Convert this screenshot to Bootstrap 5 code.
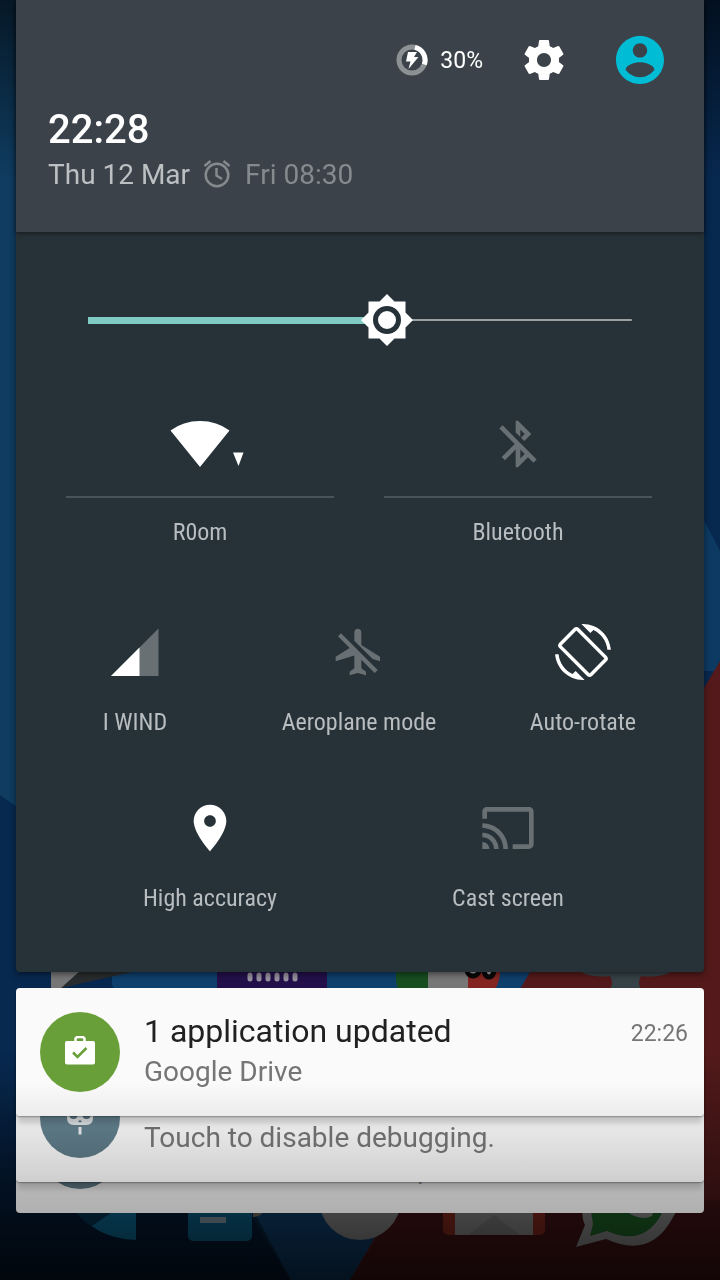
<!DOCTYPE html>
<html lang="en">
<head>
<meta charset="utf-8">
<meta name="viewport" content="width=device-width, initial-scale=1">
<title>Quick settings</title>
<link href="https://cdn.jsdelivr.net/npm/bootstrap@5.3.0/dist/css/bootstrap.min.css" rel="stylesheet">
<style>
  body { font-family: Roboto, "Noto Sans", sans-serif; background: #041c3a; min-height: 100vh; overflow-x: hidden; }
  .wallpaper { position: fixed; inset: 0; width: 100%; height: 100%; z-index: -1; }
  svg { display: block; flex: none; }
  button { font-family: inherit; }

  .shade-panel { background: #273238; border-radius: 0 0 4px 4px; box-shadow: 0 2px 6px rgba(0,0,0,.5); }
  .status-head { background: #3b4249; padding: 36px 40px 39px 32px; box-shadow: 0 1px 5px rgba(0,0,0,.5); }
  .status-icons { height: 48px; }
  .battery-text { font-size: 23px; line-height: 28px; color: #fff; margin: 2px 37px 0 12px; }
  .gear-btn { margin-right: 48px; }
  .clock { font-size: 40px; line-height: 48px; font-weight: 500; color: #fff; margin-top: 22px; }
  .date-row { font-size: 28px; line-height: 36px; margin-top: 3px; color: #bcc0c3; }
  .alarm { color: #858a8f; gap: 12px; margin-left: 11px; }

  .brightness { --level: .55; appearance: none; -webkit-appearance: none; display: block; width: 100%; height: 52px; margin: 0;
    background:
      linear-gradient(#80cbc4, #80cbc4) left 26px center / calc((100% - 52px) * var(--level)) 7px no-repeat,
      linear-gradient(#9a9fa2, #9a9fa2) right 26px center / calc((100% - 52px) * (1 - var(--level))) 2px no-repeat; }
  .brightness::-webkit-slider-thumb { appearance: none; -webkit-appearance: none; width: 52px; height: 52px; border: 0;
    background: url("data:image/svg+xml,%3Csvg xmlns='http://www.w3.org/2000/svg' viewBox='0 0 52 52'%3E%3Cpath fill='%23fff' d='M26 0l7.500 7.500H44.500V18.500L52 26l-7.500 7.500V44.500H33.500L26 52l-7.500-7.500H7.500V33.500L0 26l7.500-7.500V7.500H18.500z'/%3E%3Ccircle cx='26' cy='26' r='11.500' fill='none' stroke='%23263238' stroke-width='5'/%3E%3C/svg%3E") center / 52px no-repeat; }
  .brightness-row { padding: 62px 46px 70px; }

  .tiles { padding: 0 9px 60px 7px; }
  .tiles-wide { padding: 0 18px; margin-bottom: 78px; }
  .tiles-mid { margin-bottom: 64px; }
  .tiles-low { padding: 0 38px; }
  .tile { font-family: "Roboto Condensed", Roboto, sans-serif; font-size: 24px; line-height: 28px; color: #b8bdc0; }
  .tile-label { margin-top: 28px; }
  .tile-off svg { color: #687074; }
  .tile-on svg { color: #fff; }
  .tile-rule { height: 2px; background: #495359; margin: 24px 25px 20px; }

  .notes { margin: 16px 16px 67px; }
  .note { position: relative; padding: 24px 16px 24px 24px; border-radius: 4px; }
  .note-1 { z-index: 3; background: linear-gradient(#fafafa 74%, #ececec); box-shadow: 0 1px 2px rgba(0,0,0,.35), 0 9px 5px -2px rgba(0,0,0,.14); }
  .note-2 { z-index: 2; margin-top: -62px; background: linear-gradient(#e6e6e6 60%, #cfcfcf); box-shadow: 0 1px 2px rgba(0,0,0,.35), 0 9px 5px -2px rgba(0,0,0,.14); }
  .note-3 { z-index: 1; margin-top: -97px; background: linear-gradient(#b8b8b8 76%, #b0b0b0); }
  .note-icon { width: 80px; height: 80px; margin-right: 24px; flex: none; }
  .green-dot { background: #689f38; }
  .slate-dot { background: linear-gradient(#607d8b 40%, #526b77); }
  .deep-dot { background: #4a5e68; }
  .note-title { font-size: 32px; line-height: 38px; color: #212121; }
  .note-text { font-size: 28px; line-height: 36px; color: #757575; margin-top: 4px; }
  .note-2 .note-text { color: #6c6c6c; }
  .note-time { font-size: 23px; line-height: 28px; color: #757575; margin-top: 8px; }
</style>
</head>
<body>
<svg class="wallpaper" viewBox="0 0 720 1280" preserveAspectRatio="none" aria-hidden="true">
  <defs>
    <linearGradient id="dim" x1="0" y1="0" x2="0" y2="1">
      <stop offset="0" stop-color="#000" stop-opacity=".6"/><stop offset=".14" stop-color="#000" stop-opacity="0"/>
      <stop offset=".82" stop-color="#000" stop-opacity="0"/><stop offset="1" stop-color="#000" stop-opacity=".72"/>
    </linearGradient>
    <linearGradient id="low" x1="0" y1="0" x2="0" y2="1">
      <stop offset="0" stop-color="#010c1a" stop-opacity="0"/><stop offset=".7" stop-color="#010c1a" stop-opacity=".5"/><stop offset="1" stop-color="#010c1a" stop-opacity=".6"/>
    </linearGradient>
  </defs>
  <path fill="#07284f" d="M0 0h720v1280H0z"/>
  <path fill="#0f3c60" d="M0 0h400v1080L0 795z"/>
  <path fill="#07284f" d="M16 822V1280H0V795z"/>
  <path fill="#0f3f6c" d="M112 960h440v160l-190 160h-72L112 985z"/>
  <path fill="#0d3a62" d="M704 520l16 31v120h-30v-160z"/>
  <path fill="#541a1b" d="M720 661L704 688 537 960l-187 320h370z"/>
  <path fill="#390f12" d="M375 1240L350 1280h370v-80H395z" opacity=".6"/>
  <path fill="#777" d="M51 960h90l-80 28H51z"/><path fill="#292c2e" d="M141 970l-80 18 20-18z"/>
  <path fill="#23104a" d="M217 960h110v40H217z"/>
  <path stroke="#96919f" stroke-width="5" stroke-linecap="round" d="M250 975v4M259 975v4M268 975v4M277 975v4M286 975v4M295 975v4"/>
  <path fill="#174e20" d="M396 960h32v40h-24q-8-12-8-20z"/><path fill="#777" d="M428 960h42v40h-42z"/>
  <path fill="#842521" d="M468 960h32v15q-2 13-10 20h-22z"/>
  <g fill="#aaa" stroke="#080808" stroke-width="5"><ellipse cx="473" cy="970" rx="6" ry="6"/><ellipse cx="489" cy="970" rx="5" ry="7"/></g>
  <path fill="#364247" d="M581 972q12 6 29 4q4 6 0 14h31q-4-8 0-14q18 2 30-4z"/>
  <path fill="url(#low)" d="M0 1080h200l53 130 38 70H0z"/>
  <path fill="#0c6a94" d="M72 1205q22 34 64 35v-35z"/><path fill="#073657" d="M72 1205q10 18 20 21l22-15v-6z"/>
  <rect x="188" y="1195" width="64" height="46" rx="5" fill="#0b6189"/><path fill="#849da8" d="M200 1217h26v6h-26z"/>
  <path fill="#777066" d="M253 1205h12q-1 12-12 12z"/>
  <circle cx="360" cy="1199" r="41" fill="#888"/>
  <rect x="443" y="1190" width="102" height="45" rx="5" fill="#86291f"/><path fill="#8c8a8a" d="M455 1190h78v45h-78z"/><path fill="#7d7b7b" d="M494 1215l26 20h-52z"/>
  <path fill="#8c8c8c" d="M582 1205q0 16 3 20l-9 22 30-8q44 20 66-20l8-14z"/><path fill="#1e6527" d="M590 1205l3 19-3 12 17-5q36 16 54-16l3-10z"/><path fill="#959595" d="M618 1205q20 18 34 11l3-11z"/>
  <path fill="url(#dim)" d="M0 0h720v1280H0z"/>
</svg>

<main>
  <section class="shade-panel mx-3" aria-label="Quick settings">
    <header class="status-head">
      <div class="status-icons d-flex align-items-center justify-content-end">
        <svg width="32" height="32" viewBox="0 0 32 32" role="img" aria-label="Charging">
          <circle cx="16" cy="16" r="13" fill="none" stroke="#8c9194" stroke-width="5"/>
          <path fill="none" stroke="#fff" stroke-width="5" d="M19 3.350A13 13 0 0 1 28.300 20.500"/>
          <path fill="#fff" d="M12 8h9l-3 5h4.500L12.500 25l2-7.500H10z"/>
        </svg>
        <span class="battery-text">30%</span>
        <button class="gear-btn btn p-0 border-0" type="button" aria-label="Settings">
          <svg width="48" height="48" viewBox="0 0 24 24" fill="#fff"><path d="M19.430 12.980c.04-.32.07-.64.07-.98s-.03-.66-.07-.98l2.110-1.650c.19-.15.24-.42.12-.64l-2-3.460c-.12-.22-.39-.3-.61-.22l-2.490 1c-.52-.4-1.080-.73-1.690-.98l-.38-2.650C14.460 2.180 14.250 2 14 2h-4c-.25 0-.46.18-.49.42l-.38 2.650c-.61.25-1.170.59-1.690.98l-2.490-1c-.23-.09-.49 0-.61.22l-2 3.460c-.13.22-.07.49.12.64l2.110 1.650c-.04.32-.07.65-.07.98s.03.66.07.98l-2.110 1.650c-.19.15-.24.42-.12.64l2 3.460c.12.22.39.3.61.22l2.490-1c.52.4 1.080.73 1.690.98l.38 2.650c.03.24.24.42.49.42h4c.25 0 .46-.18.49-.42l.38-2.650c.61-.25 1.170-.59 1.690-.98l2.490 1c.23.09.49 0 .61-.22l2-3.460c.12-.22.07-.49-.12-.64l-2.110-1.650zM12 15.500c-1.930 0-3.500-1.570-3.500-3.500s1.570-3.500 3.500-3.500 3.500 1.570 3.500 3.500-1.570 3.500-3.500 3.500z"/></svg>
        </button>
        <button class="btn p-0 border-0" type="button" aria-label="User">
          <svg width="48" height="48" viewBox="2 2 20 20" fill="#00bcd4"><path d="M12 2C6.480 2 2 6.480 2 12s4.480 10 10 10 10-4.480 10-10S17.520 2 12 2zm0 3c1.660 0 3 1.340 3 3s-1.340 3-3 3-3-1.340-3-3 1.340-3 3-3zm0 14.200c-2.500 0-4.710-1.280-6-3.220.03-1.990 4-3.080 6-3.080 1.990 0 5.970 1.090 6 3.080-1.290 1.940-3.500 3.220-6 3.220z"/></svg>
        </button>
      </div>
      <div class="clock">22:28</div>
      <div class="date-row d-flex align-items-center">
        <span>Thu 12 Mar</span>
        <span class="alarm d-flex align-items-center">
          <svg width="32" height="32" viewBox="0 0 32 32" fill="none" stroke="currentColor" stroke-width="2.500" aria-hidden="true"><circle cx="16" cy="16" r="11.300"/><path d="M15.500 9v7.500l5.500 3.500M3.500 7L9.500 2M28.500 7l-6-5"/></svg>
          <span>Fri 08:30</span>
        </span>
      </div>
    </header>

    <div class="brightness-row">
      <input class="brightness" type="range" min="0" max="100" value="55" aria-label="Brightness" oninput="this.style.setProperty('--level', this.value / 100)">
    </div>

    <div class="tiles">
      <div class="tiles-wide">
        <div class="row g-0">
          <div class="col"><button type="button" class="tile tile-on btn p-0 border-0 w-100">
            <svg class="mx-auto" width="96" height="56" viewBox="0 0 96 56" fill="currentColor"><path d="M48 51L18.500 14.500Q31 5 48 5t29.500 9.500zM81 36.500h10.500L86.500 50z"/></svg>
            <span class="tile-rule d-block"></span><span class="d-block">R0om</span>
          </button></div>
          <div class="col"><button type="button" class="tile tile-off btn p-0 border-0 w-100">
            <svg class="mx-auto" width="56" height="56" viewBox="0 0 24 24" fill="currentColor"><path d="M13 5.830l1.880 1.880-1.600 1.600 1.410 1.410 3.020-3.020L12 2h-1v5.030l2 2v-3.200zM5.410 4L4 5.410 10.590 12 5 17.590 6.410 19 11 14.410V22h1l4.290-4.290 2.300 2.290L20 18.590 5.410 4zM13 18.170v-3.760l1.880 1.880L13 18.170z"/></svg>
            <span class="tile-rule d-block"></span><span class="d-block">Bluetooth</span>
          </button></div>
        </div>
      </div>
      <div class="tiles-mid row g-0">
        <div class="col"><button type="button" class="tile tile-on btn p-0 border-0 w-100">
          <svg class="mx-auto" width="56" height="56" viewBox="0 0 56 56"><path fill="#687074" d="M51.500 4.500V52H4z"/><path fill="#fff" d="M32.500 23.500V52H4z"/></svg>
          <span class="tile-label d-block">I WIND</span>
        </button></div>
        <div class="col"><button type="button" class="tile tile-off btn p-0 border-0 w-100">
          <svg class="mx-auto" width="56" height="56" viewBox="0 0 24 24" fill="currentColor"><path d="M13 9V3.500c0-.83-.67-1.500-1.500-1.500S10 2.670 10 3.500v3.680l7.830 7.830L21 16v-2l-8-5zM3 5.270l4.990 4.990L2 14v2l8-2.500V19l-2 1.500V22l3.500-1 3.500 1v-1.500L13 19v-3.730L18.730 21 20 19.730 4.270 4 3 5.270z"/></svg>
          <span class="tile-label d-block">Aeroplane mode</span>
        </button></div>
        <div class="col"><button type="button" class="tile tile-on btn p-0 border-0 w-100">
          <svg class="mx-auto" width="56" height="56" viewBox="0 0 24 24" fill="currentColor"><path d="M16.480 2.520c3.270 1.550 5.610 4.720 5.970 8.480h1.500C23.440 4.840 18.290 0 12 0l-.66.03 3.810 3.810 1.330-1.320zm-6.250-.77c-.59-.59-1.540-.59-2.120 0L1.750 8.110c-.59.59-.59 1.540 0 2.120l12.020 12.020c.59.59 1.540.59 2.120 0l6.360-6.360c.59-.59.59-1.540 0-2.120L10.230 1.750zm4.600 19.440L2.810 9.170l6.360-6.360 12.020 12.020-6.360 6.360zm-7.310.29C4.250 19.940 1.910 16.760 1.550 13H.05C.56 19.160 5.710 24 12 24l.66-.03-3.810-3.810-1.330 1.320z"/></svg>
          <span class="tile-label d-block">Auto-rotate</span>
        </button></div>
      </div>
      <div class="tiles-low">
        <div class="row g-0">
          <div class="col"><button type="button" class="tile tile-on btn p-0 border-0 w-100">
            <svg class="mx-auto" width="56" height="56" viewBox="0 0 24 24" fill="currentColor"><path d="M12 2C8.130 2 5 5.130 5 9c0 5.250 7 13 7 13s7-7.750 7-13c0-3.870-3.130-7-7-7zm0 9.500c-1.380 0-2.500-1.120-2.500-2.500s1.120-2.500 2.500-2.500 2.500 1.120 2.500 2.500-1.120 2.500-2.500 2.500z"/></svg>
            <span class="tile-label d-block">High accuracy</span>
          </button></div>
          <div class="col"><button type="button" class="tile tile-off btn p-0 border-0 w-100">
            <svg class="mx-auto" width="56" height="56" viewBox="0 0 24 24" fill="currentColor"><path d="M21 3H3c-1.100 0-2 .9-2 2v3h2V5h18v14h-7v2h7c1.100 0 2-.9 2-2V5c0-1.100-.9-2-2-2zM1 18v3h3c0-1.660-1.340-3-3-3zm0-4v2c2.760 0 5 2.240 5 5h2c0-3.870-3.130-7-7-7zm0-4v2c4.970 0 9 4.030 9 9h2c0-6.080-4.930-11-11-11z"/></svg>
            <span class="tile-label d-block">Cast screen</span>
          </button></div>
        </div>
      </div>
    </div>
  </section>

  <section class="notes" aria-label="Notifications">
    <article class="note note-1 d-flex">
      <div class="note-icon green-dot rounded-circle d-flex align-items-center justify-content-center">
        <svg width="32" height="32" viewBox="0 0 32 32" aria-hidden="true"><rect x="1" y="5" width="30" height="23.500" rx="2" fill="#fff"/><path fill="none" stroke="#fff" stroke-width="2.500" d="M11.500 6V2.500l1.500-1.500h6l1.500 1.500V6"/><path fill="none" stroke="#689f38" stroke-width="2.500" d="M9 16.500l4.500 4.500L22.500 12"/></svg>
      </div>
      <div class="flex-grow-1">
        <div class="note-title">1 application updated</div>
        <div class="note-text">Google Drive</div>
      </div>
      <div class="note-time">22:26</div>
    </article>
    <article class="note note-2 d-flex">
      <div class="note-icon slate-dot rounded-circle d-flex align-items-center justify-content-center">
        <svg width="32" height="40" viewBox="0 0 32 40" aria-hidden="true"><path fill="#d5d9db" d="M3 12h26v8q0 7-7 7H10q-7 0-7-7z"/><circle cx="9.500" cy="17" r="4" fill="#536e7a"/><circle cx="22.500" cy="17" r="4" fill="#536e7a"/><path fill="#536e7a" d="M14 23.500l2-1.500 2 1.500-2 1z"/><path fill="#d5d9db" d="M14.500 29h3v7.500h-3z"/></svg>
      </div>
      <div class="flex-grow-1">
        <div class="note-title">&nbsp;</div>
        <div class="note-text">Touch to disable debugging.</div>
      </div>
    </article>
    <article class="note note-3 d-flex">
      <div class="note-icon deep-dot rounded-circle"></div>
      <div class="flex-grow-1">
        <div class="note-title">&nbsp;</div>
        <div class="note-text">Touch for other USB options.</div>
      </div>
    </article>
  </section>
</main>
<script src="https://cdn.jsdelivr.net/npm/bootstrap@5.3.0/dist/js/bootstrap.bundle.min.js"></script>
</body>
</html>
